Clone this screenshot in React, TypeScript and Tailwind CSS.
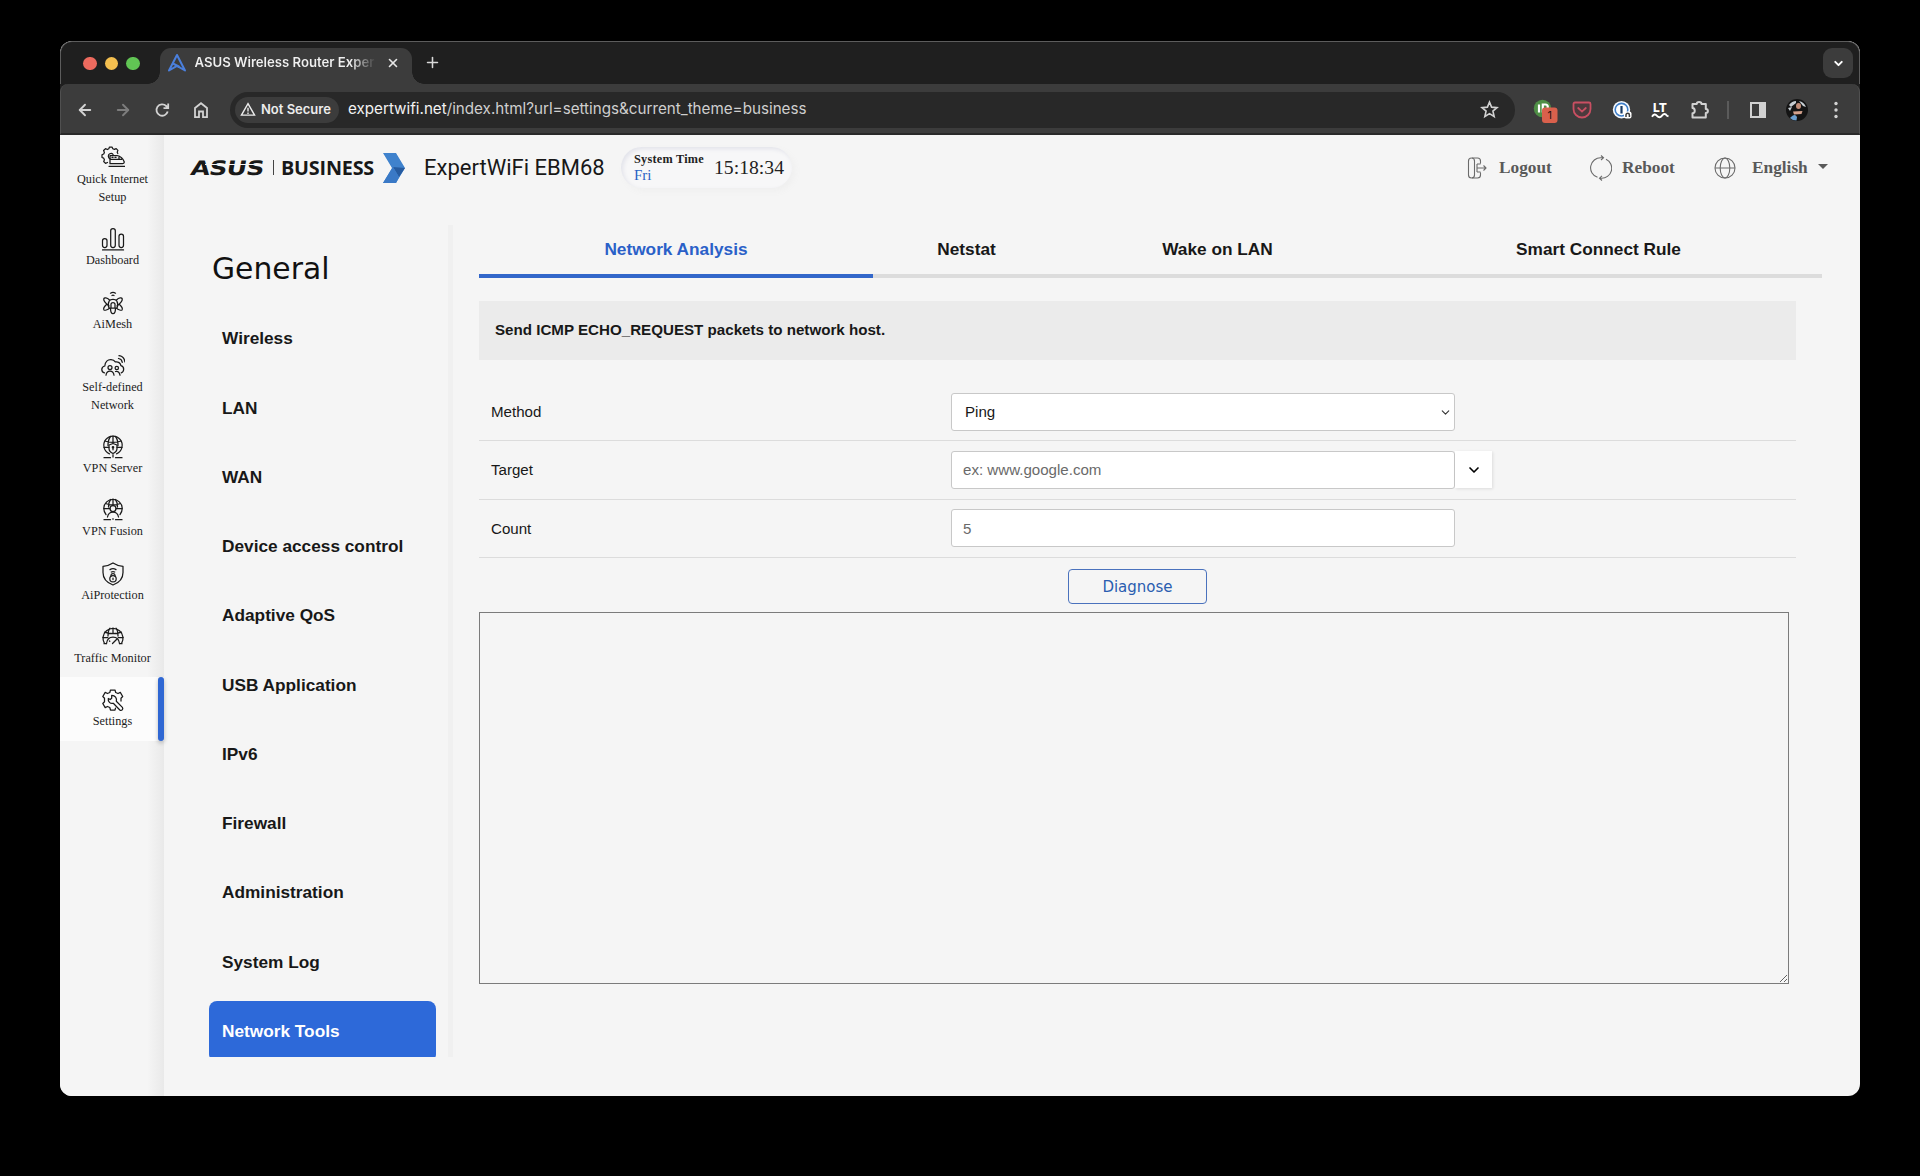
import type { ReactNode } from "react";
import { ArrowLeft, ArrowRight, ChevronDown, Plus, X } from "lucide-react";

const Glyph = ({ children }: { children: ReactNode }) => (
  <svg
    viewBox="0 0 24 24"
    className="h-6 w-6"
    fill="none"
    stroke="#1a1a1a"
    strokeWidth="1.25"
    strokeLinecap="round"
    strokeLinejoin="round"
  >
    {children}
  </svg>
);

const sideItems = [
  {
    label: ["Quick Internet", "Setup"],
    icon: (
      <Glyph>
        <path d="M6.5 16.5 4.5 17.3 2.7 15.6 3.4 13.7 2.7 12.2 1 11.5V8.8l1.7-.8.7-1.6-.8-1.9 1.9-1.8 1.9.8L7.8 2.7 8.5 1H11l.8 1.7 1.6.7 1.8-.8 1.7 1.8-.7 1.9.6 1.2" />
        <path d="M9 12.8C7 12 6.7 8.8 8.7 7.8c1.3-.7 2.7-.3 3.400.7" />
        <path d="M9 9.500h7.200c3 .2 6.200 3.600 7 6.200.2 1.200-.6 2-1.700 2H9zM9 13.400h11.500M18 10.200v2.800M8 20.300h15.500M11 11.400h1M14 11.400h1" />
      </Glyph>
    ),
  },
  {
    label: ["Dashboard"],
    icon: (
      <Glyph>
        <rect x="1.5" y="11.5" width="4.5" height="9" rx="2.2" />
        <rect x="9.7" y="1.5" width="4.6" height="19" rx="2.2" />
        <rect x="18" y="7" width="4.5" height="13.5" rx="2.2" />
        <path d="M1.5 22.9h21" />
      </Glyph>
    ),
  },
  {
    label: ["AiMesh"],
    icon: (
      <Glyph>
        <path d="M9.5 2.2c1.5-1 3.500-1 5 0M11 4.500c.7-.4 1.300-.4 2 0" />
        <path d="M8 17c-.9-2-.9-5 .2-7C9.500 7.700 14.500 7.700 15.800 10c1.100 2 1.100 5 .2 7" />
        <path d="M8.500 9C6 6.500 3.200 6.500 2.800 7.700c-.4 1.500 2 4.800 5 7M15.500 9c2.500-2.500 5.300-2.500 5.700-1.300.4 1.500-2 4.800-5 7M5.500 13.500c-2.200 2-3.200 4.200-2.600 5.300.7 1 3.600.2 6-1.800M18.500 13.500c2.200 2 3.200 4.200 2.600 5.300-.7 1-3.600.2-6-1.800" />
        <path d="M10 17v-4c.4-1.800 3.600-1.800 4 0v4M9.500 17c0 3.500 1 5.700 2.500 5.700s2.500-2.200 2.500-5.700z" />
      </Glyph>
    ),
  },
  {
    label: ["Self-defined", "Network"],
    icon: (
      <Glyph>
        <path d="M3.500 18.800C0 18.500-.3 12.800 3.800 12c.2-4.500 3-6.500 6.200-6.300 2 .1 3.500 1 4.300 2.200 3-.5 5.200 1.200 5.600 3.700 3.700.8 3.600 6.200.3 7.200" />
        <circle cx="9" cy="13.5" r="2" />
        <circle cx="15.8" cy="14" r="1.7" />
        <path d="M5 21.200c.3-3 2-4.200 4-4.200s3.700 1.200 4 4.200M14.500 17.500c2.200-.7 4.100.8 4.500 3.700M17.500 4.500c2 .3 3.500 1.800 3.800 3.800M18 1.700c3.300.4 5.500 2.900 5.900 6.200" />
      </Glyph>
    ),
  },
  {
    label: ["VPN Server"],
    icon: (
      <Glyph>
        <path d="M8.500 18.800a9.200 9.200 0 1 1 7 0" />
        <path d="M4 6c4 1.700 12 1.700 16 0M3 12.300h5M16 12.300h5M9.500 1.500C7.500 4 7 7 7 10.500M14.500 1.500c2 2.500 2.500 5.500 2.500 9M12 1v6" />
        <path d="M12 8.500 16 10v3.500c0 2.300-1.700 4-4 5-2.300-1-4-2.700-4-5V10zM12 12.300v2.500M12 19.500V22M3 22.700h6.500M14.500 22.700H21" />
        <circle cx="12" cy="12.2" r=".7" />
      </Glyph>
    ),
  },
  {
    label: ["VPN Fusion"],
    icon: (
      <Glyph>
        <path d="M5 16.500A9.200 9.200 0 1 1 19 16.500" />
        <path d="M4.500 5.500c4 1.700 11 1.700 15 0M3 10.500h6M15 10.500h6M9.500 1.500C8 3.500 7.500 6 7.500 9M14.500 1.500C16 3.500 16.500 6 16.500 9M12 1v6" />
        <circle cx="12" cy="10.5" r="3" />
        <path d="M6.500 19c.5-3 2.500-5 5.500-5s5 2 5.500 5M12 20.700v.6M3 21.700h6.500M14.500 21.700H21" />
      </Glyph>
    ),
  },
  {
    label: ["AiProtection"],
    icon: (
      <Glyph>
        <path d="M12 1c3 2 6 3 10 3.300v6.200c0 6-4 10.300-10 12.500C6 20.800 2 16.500 2 10.500V4.300C6 4 9 3 12 1z" />
        <path d="M9 7.600c2-1.200 4-1.200 6 0M10.300 10c1.200-.6 2.200-.6 3.400 0M10 14v-1c.2-1.800 3.800-1.800 4 0v1" />
        <circle cx="12" cy="16.7" r="3.2" />
        <path d="M12 16v1.500" />
      </Glyph>
    ),
  },
  {
    label: ["Traffic Monitor"],
    icon: (
      <Glyph>
        <path d="M3.500 18.700A10 10 0 1 1 20.500 18.700M3 18.700h2.500M18.500 18.700H21" />
        <path d="M3.500 7.200c5 1.800 12 1.800 17 0M1.800 12.500h5M17.200 12.500h5M9 3.200C7.500 5 7 8 7 11M15 3.200c1.500 1.800 2 4.800 2 7.800M12 3v5" />
        <path d="M5.500 18.500C6 14.500 8.500 12.200 12 12.200s6 2.300 6.500 6.300M11.500 18.500l4-4M8.500 16l.3.3" />
      </Glyph>
    ),
  },
  {
    label: ["Settings"],
    icon: (
      <Glyph>
        <path d="M14.500 20.200 14 22H9.500L8.800 19.500 6.500 18.500 4.200 19.600 1.800 15.500 3.500 13.800V10.200L1.800 8.500 4.200 4.400 6.500 5.500 8.800 4.500 9.500 2H14l.7 2.500L17 5.500l2.300-1.100 2.400 4.100L20 10.200v2.800" />
        <path d="M10.700 7.300v3l-1.500 1.200L7.300 10.500c-.6 3.200 2 5.600 5 4.800l6.500 6.700c1.800 1.200 3.800-.8 2.600-2.600l-6.100-6.200c.9-3-1.300-6-4.600-5.900z" />
      </Glyph>
    ),
    active: true,
  },
];

const menuItems = [
  "Wireless",
  "LAN",
  "WAN",
  "Device access control",
  "Adaptive QoS",
  "USB Application",
  "IPv6",
  "Firewall",
  "Administration",
  "System Log",
];

const BrowserTabs = () => (
  <div className="flex h-[43px] items-end rounded-t-[12px] border border-b-0 border-[#5c5c5c] bg-[#1f1f1f] pl-[22px] pr-[6px]">
    <div className="mb-[14px] flex gap-[8px]">
      <span className="h-[13.5px] w-[13.5px] rounded-full bg-[#ed6a5e]" />
      <span className="h-[13.5px] w-[13.5px] rounded-full bg-[#f4bf4f]" />
      <span className="h-[13.5px] w-[13.5px] rounded-full bg-[#61c554]" />
    </div>
    <span className="ml-[8px] h-3 w-3 bg-[radial-gradient(circle_at_0_0,transparent_11.5px,#3c3c3c_12px)]" />
    <div className="flex h-[36px] w-[252px] items-center rounded-t-[11px] bg-[#3c3c3c] pb-[6px] pl-[7px] pr-[12px]">
      <svg viewBox="0 0 20 20" className="h-[20px] w-[20px]" fill="none" stroke="#4a7fdc" strokeWidth="2">
        <path d="M10 2 18 17.500 10 12.800 2 17.500z" strokeLinejoin="round" />
        <path d="M6 10.500 12.500 14" />
      </svg>
      <span className="ml-[8px] w-[181px] overflow-hidden bg-gradient-to-r from-[#f0f0f0] from-86% to-[#3c3c3c] bg-clip-text font-['Inter'] text-[13.2px] font-semibold tracking-[-0.02px] whitespace-nowrap text-transparent">
        ASUS Wireless Router Exper
      </span>
      <X className="ml-auto h-[14px] w-[14px] text-[#e6e6e6]" strokeWidth={2.8} />
    </div>
    <span className="h-3 w-3 bg-[radial-gradient(circle_at_100%_0,transparent_11.5px,#3c3c3c_12px)]" />
    <Plus className="mb-[13px] h-[17px] w-[17px] text-[#d8d8d8]" strokeWidth={2.2} />
    <span className="mb-[6px] ml-auto flex h-[30px] w-[30px] items-center justify-center rounded-[9px] bg-[#3c3c3c]">
      <ChevronDown className="h-[13px] w-[13px] text-white" strokeWidth={3.6} />
    </span>
  </div>
);

const Toolbar = () => (
  <div className="bg-[#1f1f1f]">
    <div className="flex h-[51px] items-center rounded-t-[8px] border-x border-b-2 border-x-[#505050] border-b-[#292929] bg-[#3c3c3c] pt-[2px] pl-[15px] text-[#d2d2d2]">
      <ArrowLeft className="h-[18px] w-[18px]" strokeWidth={2.5} />
      <ArrowRight className="ml-[20px] h-[18px] w-[18px] text-[#7d7d7d]" strokeWidth={2.5} />
      <svg viewBox="0 0 18 18" className="ml-[21px] h-[18px] w-[18px]" fill="none" stroke="currentColor" strokeWidth="1.8">
        <path d="M14.700 10.500A5.700 5.700 0 1 1 13.200 5L15 6.800M15.200 2.500v4.700h-4.700" />
      </svg>
      <svg viewBox="0 0 18 18" className="ml-[21px] h-[18px] w-[18px]" fill="none" stroke="currentColor" strokeWidth="1.8">
        <path d="M3 7 9 2.200l6 4.800v9.200h-4v-5.700H7v5.700H3z" />
      </svg>
      <div className="ml-[20px] flex h-[36px] w-[1285px] items-center rounded-full bg-[#282828] pl-[5px] pr-[16px]">
        <div className="flex h-[26px] w-[104px] items-center rounded-full bg-[#3c3c3c] pl-[5px] text-[#ececec]">
          <svg viewBox="0 0 16 16" className="h-[15px] w-[16px]" fill="none" stroke="currentColor" strokeWidth="1.5">
            <path d="M8 1.800 15 14H1zM8 6v4.200M8 11.200v1.500" />
          </svg>
          <span className="ml-[5px] font-['Inter'] text-[13px] font-semibold whitespace-nowrap">Not Secure</span>
        </div>
        <span className="ml-[9px] font-['Inter'] text-[15.2px] whitespace-nowrap text-[#cfcfcf]">
          <span className="text-[#f2f2f2]">expertwifi.net</span>/index.html?url=settings&amp;current_theme=business
        </span>
        <svg viewBox="0 0 20 20" className="ml-auto h-[19px] w-[19px]" fill="none" stroke="currentColor" strokeWidth="1.7">
          <path d="m10 2.200 2.200 5.300 5.700.5-4.300 3.700 1.300 5.600L10 14.300l-4.900 3 1.300-5.600L2.100 8l5.700-.5z" />
        </svg>
      </div>
      <svg viewBox="0 0 26 26" className="ml-[17px] h-[26px] w-[26px]">
        <circle cx="10.500" cy="11.500" r="8.700" fill="#4f8f46" />
        <path d="M7 7.500v8M10.800 15.500v-8h2.500a2.500 2.500 0 0 1 0 5" fill="none" stroke="#fff" strokeWidth="2.2" />
        <rect x="10" y="10.500" width="15.500" height="15.500" rx="3" fill="#d9604c" />
        <text x="17.700" y="22.300" fontSize="11" textAnchor="middle" fill="#26100c" fontFamily="Inter">1</text>
      </svg>
      <svg viewBox="0 0 20 20" className="ml-[14px] h-[20px] w-[20px]" fill="none" stroke="#c94f62" strokeWidth="1.8">
        <path d="M3 2.500h14q1.500 0 1.500 1.500v5a8.500 8.500 0 0 1-17 0V4q0-1.500 1.500-1.500z" fill="#4c3a3d" />
        <path d="m6.200 8 3.800 3.600L13.800 8" strokeLinecap="round" />
      </svg>
      <svg viewBox="0 0 20 20" className="ml-[20px] h-[20px] w-[20px]">
        <circle cx="9.500" cy="9.700" r="8.700" fill="#f5f9ff" />
        <circle cx="9.500" cy="9.700" r="6.300" fill="#fff" stroke="#3f7fca" strokeWidth="1.6" />
        <rect x="8.400" y="6" width="2.200" height="7.500" fill="#173a66" />
        <rect x="12" y="11.500" width="7.500" height="7" rx="2" fill="#fff" />
        <path d="M14 17v-2a1.700 1.700 0 0 1 3.400 0v2" fill="none" stroke="#3a3a3a" strokeWidth="1.5" />
      </svg>
      <svg viewBox="0 0 18 18" className="ml-[19px] h-[18px] w-[18px]">
        <text x="9" y="11" fontSize="12" fontWeight="800" textAnchor="middle" fill="#fff" fontFamily="Inter">LT</text>
        <path d="M1 15.800q2.500-4 5-1t5-.2 5 .2l1.500.5" fill="none" stroke="#fff" strokeWidth="1.9" />
      </svg>
      <svg viewBox="0 0 20 20" className="ml-[21px] h-[20px] w-[20px]" fill="none" stroke="currentColor" strokeWidth="2" strokeLinejoin="round">
        <path d="M2.500 4h4.200c0-2.800 4.800-2.800 4.800 0h4.300v5c2.800 0 2.800 4 0 4v4.500H2.500v-4.200c3-.3 3-5 0-5.300z" />
      </svg>
      <span className="ml-[17px] h-[18px] w-[2px] bg-[#5b5b5b]" />
      <svg viewBox="0 0 18 18" className="ml-[20px] h-[18px] w-[18px]">
        <rect x="2" y="2" width="14" height="14" fill="none" stroke="#d2d2d2" strokeWidth="2" />
        <path d="M10 2h6v14h-6z" fill="#d2d2d2" />
      </svg>
      <svg viewBox="0 0 22 22" className="ml-[19px] h-[22px] w-[22px]">
        <circle cx="11" cy="11" r="11" fill="#141414" />
        <path d="M3 6Q6 2 10 2v2L5 8zM13 2q5 1 7 6l-3-1zM2 9l4-1-2 4z" fill="#c6cdd2" />
        <ellipse cx="12.500" cy="7" rx="2.500" ry="3" fill="#c28d78" />
        <path d="M7 12.500l9.500-.5-1 3-7.500.5z" fill="#d3a18c" />
        <path d="M5 18q4-4 6 0l-.5 3.500q-4 0-6.500-2.500z" fill="#6a9fd0" />
      </svg>
      <svg viewBox="0 0 4 18" className="ml-[26px] h-[18px] w-[4px]" fill="currentColor">
        <circle cx="2" cy="2.500" r="1.700" />
        <circle cx="2" cy="9" r="1.700" />
        <circle cx="2" cy="15.500" r="1.700" />
      </svg>
    </div>
  </div>
);

const Sidebar = () => (
  <nav className="w-[104px] shrink-0 bg-[linear-gradient(to_right,#f5f5f5_84%,#e9e9e9)]">
    {sideItems.map((item) => (
      <div
        key={item.label[0]}
        className={
          item.active
            ? "flex h-[63.3px] items-stretch bg-[#fcfcfc]"
            : "flex items-stretch"
        }
      >
        <div className="flex w-[98px] flex-col items-center pt-[11px] pb-[10.3px] pl-[7px]">
          {item.icon}
          {item.label.map((line) => (
            <span
              key={line}
              className="h-[18px] font-['Liberation_Serif'] text-[12.24px] leading-[18px] whitespace-nowrap text-[#1c1c1c]"
            >
              {line}
            </span>
          ))}
        </div>
        {item.active && (
          <span className="w-[6px] rounded-[3px] bg-[#2f67d3] shadow-[0_2px_4px_rgba(0,0,0,0.25)]" />
        )}
      </div>
    ))}
  </nav>
);

const Header = () => (
  <header className="flex h-[90px] items-start pl-[27px] font-['Liberation_Serif']">
    <div className="flex h-[64px] items-center pt-px">
      <div className="relative flex h-[16px] w-[73px] items-center">
        <span className="origin-left scale-x-[1.25] -skew-x-[8deg] font-['DejaVu_Sans'] text-[20px] leading-4 font-bold tracking-[-0.6px] text-[#181818]">
          ASUS
        </span>
        <span className="absolute top-[4px] left-[14px] h-px w-[60px] bg-[#f5f5f5]" />
      </div>
      <span className="ml-[9px] h-[15px] w-px bg-[#444]" />
      <span className="ml-[7px] w-[93px] font-['Open_Sans'] text-[19.8px] font-bold tracking-[-0.2px] text-[#181818]">
        BUSINESS
      </span>
      <svg viewBox="0 0 22 30" className="ml-[9px] h-[30px] w-[22px]">
        <path d="M0 0h13l9 15-9 15H0l9-15z" fill="#3f82cd" />
        <path d="M22 15 16 24 10 14z" fill="#265ba0" />
        <path d="M0 30 10 14l6 10-3 6z" fill="#3a79c6" />
      </svg>
      <span className="ml-[19px] w-[181px] font-['Roboto'] text-[22px] whitespace-nowrap text-[#181818]">
        ExpertWiFi EBM68
      </span>
      <div className="ml-[16px] flex h-[41px] w-[171px] items-center rounded-full bg-[#f7f7f8] pl-[13px] shadow-[inset_2px_2px_4px_#e2e3ea,3px_3px_6px_#efefef]">
        <div className="w-[80px]">
          <div className="text-[12.24px] leading-[15px] font-bold tracking-[0.25px] whitespace-nowrap text-[#222]">System Time</div>
          <div className="text-[15px] leading-[17px] text-[#2a62c4]">Fri</div>
        </div>
        <span className="text-[19.7px] text-[#222]">15:18:34</span>
      </div>
    </div>
    <div className="ml-auto flex h-[64px] items-center pt-px pr-[32px] text-[17.3px] font-bold text-[#595959]">
      <svg viewBox="0 0 22 22" className="h-[22px] w-[22px]" fill="none" stroke="#6b6b6b" strokeWidth="1.1" strokeLinejoin="round">
        <rect x="2.500" y="1" width="6" height="20" rx="3" />
        <path d="M6 1h5.500q3 0 3 3v2.500M6 21h5.500q3 0 3-3v-2.500M11 7h3.500M11 15h3.500M11 7v8M11 11h9M17.500 8.500 20 11l-2.500 2.500" />
      </svg>
      <span className="ml-[11px] w-[54px]">Logout</span>
      <svg viewBox="0 0 22 26" className="ml-[37px] h-[26px] w-[22px]" fill="none" stroke="#6b6b6b" strokeWidth="1.1">
        <path d="M7.500 22.300A10 10 0 0 1 11 2.800h2M16 4.200A10 10 0 0 1 11 23.200H9.500M11 .5l2.500 2.300L11 5M12 20.800 9.500 23.200l2.500 2.300" />
      </svg>
      <span className="ml-[10px] w-[55px]">Reboot</span>
      <svg viewBox="0 0 22 22" className="ml-[37px] h-[22px] w-[22px]" fill="none" stroke="#6b6b6b" strokeWidth="1.1">
        <circle cx="11" cy="11" r="10" />
        <ellipse cx="11" cy="11" rx="4.800" ry="10" />
        <path d="M1 11h20" />
      </svg>
      <span className="ml-[16px] w-[58px]">English</span>
      <span className="ml-[8px] mb-[3px] border-x-[5px] border-t-[5px] border-x-transparent border-t-[#595959]" />
    </div>
  </header>
);

const Menu = () => (
  <aside className="h-[832px] w-[289px] shrink-0 overflow-hidden border-r-[5px] border-[#f0f0f0] pl-[45px]">
    <h1 className="pt-[19px] pl-[3px] font-['DejaVu_Sans'] text-[29.8px] leading-[50px] text-[#111]">General</h1>
    <ul className="pt-[10.6px]">
      {menuItems.map((item) => (
        <li key={item} className="flex h-[69.25px] items-center pl-[13px] text-[17.25px] font-bold text-[#181818]">
          {item}
        </li>
      ))}
    </ul>
    <div className="mt-[3.9px] flex h-[61px] w-[227px] items-center rounded-[8px] bg-[#2d69d9] pl-[13px] text-[17.25px] font-bold text-white">
      Network Tools
    </div>
  </aside>
);

const field = "rounded-[3px] border border-[#c8c8c8] bg-white";

const Panel = () => (
  <main className="w-[1344px]">
    <div className="flex h-[53px] text-[17.25px] font-bold text-[#181818]">
      <div className="w-[394px] border-b-4 border-[#3367ca] pt-[12px] text-center text-[#2a60c8]">Network Analysis</div>
      <div className="w-[187px] border-b-4 border-[#dcdcdc] pt-[12px] text-center">Netstat</div>
      <div className="w-[315px] border-b-4 border-[#dcdcdc] pt-[12px] text-center">Wake on LAN</div>
      <div className="w-[447px] border-b-4 border-[#dcdcdc] pt-[12px] text-center">Smart Connect Rule</div>
    </div>
    <div className="mt-[22.5px] flex h-[59px] w-[1317px] items-center bg-[#ebebeb] pt-px pl-[16px] text-[15.15px] font-bold text-[#181818]">
      Send ICMP ECHO_REQUEST packets to network host.
    </div>
    <div className="w-[1317px] pt-[23.5px] text-[15.1px] text-[#181818]">
      <div className="flex h-[58px] items-center border-b border-[#dcdcdc]">
        <span className="w-[472px] pt-px pl-[12px]">Method</span>
        <div className={`${field} flex h-[38px] w-[504px] items-center justify-between pt-px pl-[13px] pr-[2px]`}>
          Ping
          <ChevronDown className="h-[13px] w-[13px] text-[#333]" strokeWidth={2} />
        </div>
      </div>
      <div className="flex h-[58.5px] items-center border-b border-[#dcdcdc]">
        <span className="w-[472px] pt-px pl-[12px]">Target</span>
        <div className={`${field} flex h-[38px] w-[504px] items-center pt-px pl-[11px] text-[#6a6a6a]`}>ex: www.google.com</div>
        <div className="flex h-[37px] w-[37px] items-center justify-center bg-white shadow-[1px_1px_3px_rgba(0,0,0,0.1)]">
          <ChevronDown className="h-[16px] w-[16px] text-black" strokeWidth={2.5} />
        </div>
      </div>
      <div className="flex h-[58.5px] items-center border-b border-[#dcdcdc]">
        <span className="w-[472px] pt-[2px] pl-[12px]">Count</span>
        <div className={`${field} flex h-[38px] w-[504px] items-center pt-[2px] pl-[11px] text-[#6a6a6a]`}>5</div>
      </div>
    </div>
    <div className="flex pt-[11px] pl-[589px]">
      <button className="h-[35px] w-[139px] rounded-[4px] border border-[#4a72bd] pt-[2px] font-['DejaVu_Sans'] text-[15px] text-[#2a5db0]">
        Diagnose
      </button>
    </div>
    <textarea className="mt-[8px] block h-[372px] w-[1310px] border border-[#7b7b7b] bg-transparent outline-none" />
  </main>
);

export default function App() {
  return (
    <div className="h-[1176px] w-[1920px] overflow-hidden bg-black pt-[41px] pl-[60px]">
      <div className="h-[1055px] w-[1800px] overflow-hidden rounded-[12px] bg-[#f5f5f5] font-['Liberation_Sans',sans-serif]">
        <BrowserTabs />
        <Toolbar />
        <div className="flex h-[961px]">
          <Sidebar />
          <div className="w-[1696px]">
            <Header />
            <div className="flex gap-[26px]">
              <Menu />
              <Panel />
            </div>
          </div>
        </div>
      </div>
    </div>
  );
}
